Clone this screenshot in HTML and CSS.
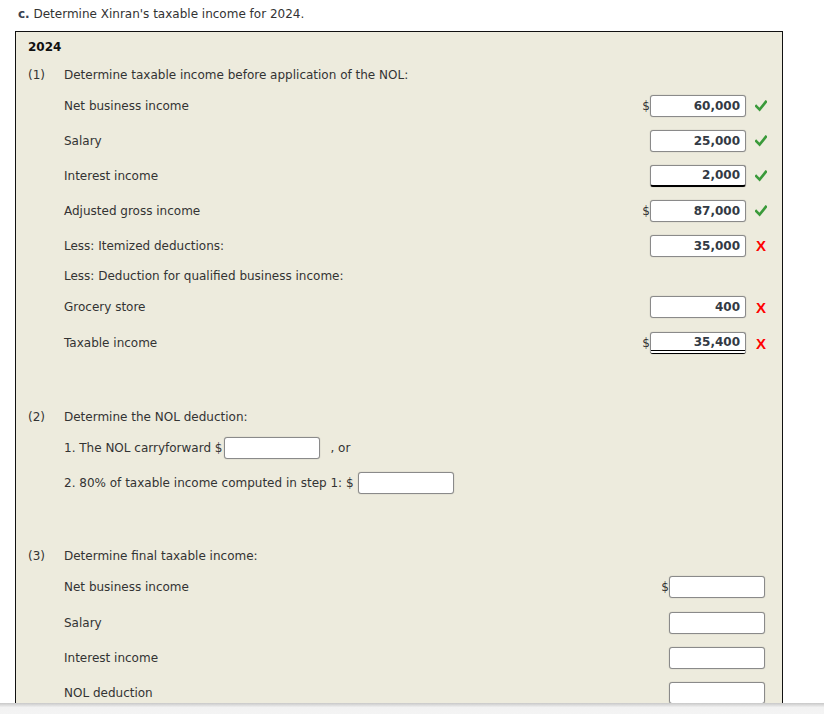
FILE: index.html
```html
<!DOCTYPE html>
<html>
<head>
<meta charset="utf-8">
<link rel="stylesheet" href="styles.css">
</head>
<body>
<div class="title"><b>c.</b> Determine Xinran's taxable income for 2024.</div>
<div class="box">
  <div class="row r-year"><b>2024</b></div>

  <div class="row r-head"><span class="num">(1)</span><span class="lbl">Determine taxable income before application of the NOL:</span></div>
  <div class="row r35"><span class="lbl ind">Net business income</span><span class="cell"><span class="dol">$</span><span class="inp">60,000</span><span class="mark"><svg class="chk" viewBox="0 0 12 12"><path d="M1.2 6.2 L4.6 9.6 L10.8 1.8"/></svg></span></span></div>
  <div class="row r35"><span class="lbl ind">Salary</span><span class="cell"><span class="dol"></span><span class="inp">25,000</span><span class="mark"><svg class="chk" viewBox="0 0 12 12"><path d="M1.2 6.2 L4.6 9.6 L10.8 1.8"/></svg></span></span></div>
  <div class="row r35"><span class="lbl ind">Interest income</span><span class="cell"><span class="dol"></span><span class="inp u1">2,000</span><span class="mark"><svg class="chk" viewBox="0 0 12 12"><path d="M1.2 6.2 L4.6 9.6 L10.8 1.8"/></svg></span></span></div>
  <div class="row r35"><span class="lbl ind">Adjusted gross income</span><span class="cell"><span class="dol">$</span><span class="inp">87,000</span><span class="mark"><svg class="chk" viewBox="0 0 12 12"><path d="M1.2 6.2 L4.6 9.6 L10.8 1.8"/></svg></span></span></div>
  <div class="row r35"><span class="lbl ind">Less: Itemized deductions:</span><span class="cell"><span class="dol"></span><span class="inp">35,000</span><span class="mark bad">X</span></span></div>
  <div class="row r-head"><span class="lbl ind">Less: Deduction for qualified business income:</span></div>
  <div class="row r36"><span class="lbl ind">Grocery store</span><span class="cell"><span class="dol"></span><span class="inp">400</span><span class="mark bad">X</span></span></div>
  <div class="row r36"><span class="lbl ind">Taxable income</span><span class="cell"><span class="dol">$</span><span class="inp u2">35,400</span><span class="mark bad">X</span></span></div>

  <div class="row r-head sec"><span class="num">(2)</span><span class="lbl">Determine the NOL deduction:</span></div>
  <div class="row r36"><span class="lbl ind">1. The NOL carryforward $</span><span class="inp empty s1"></span><span class="after">, or</span></div>
  <div class="row r34"><span class="lbl ind">2. 80% of taxable income computed in step 1: $</span><span class="inp empty s2"></span></div>

  <div class="row r-head sec"><span class="num">(3)</span><span class="lbl">Determine final taxable income:</span></div>
  <div class="row r36"><span class="lbl ind">Net business income</span><span class="cell c3"><span class="dol">$</span><span class="inp empty"></span></span></div>
  <div class="row r35"><span class="lbl ind">Salary</span><span class="cell c3"><span class="dol"></span><span class="inp empty"></span></span></div>
  <div class="row r35"><span class="lbl ind">Interest income</span><span class="cell c3"><span class="dol"></span><span class="inp empty"></span></span></div>
  <div class="row r35"><span class="lbl ind">NOL deduction</span><span class="cell c3"><span class="dol"></span><span class="inp empty"></span></span></div>
</div>
<div class="bottombar"></div>
</body>
</html>
```
FILE: styles.css
```css
html, body {
  margin: 0;
  padding: 0;
  background: #fff;
  overflow: hidden;
}
body {
  font-family: "DejaVu Sans", Verdana, sans-serif;
  font-size: 12px;
  color: #333;
  width: 824px;
  height: 714px;
}
.title {
  height: 31px;
  line-height: 28px;
  padding-left: 18px;
  box-sizing: border-box;
}
.title b { color: #3a4250; }
.box {
  margin-left: 15px;
  width: 768px;
  box-sizing: border-box;
  border: 1px solid #111;
  border-bottom: none;
  background: #edebdd;
  padding: 0 0 0 12px;
}
.row {
  display: flex;
  align-items: center;
}
.r-year { height: 30px; }
.r-year b { font-weight: bold; color: #111; }
.r-head { height: 26px; }
.r35 { height: 35px; }
.r36 { height: 36px; }
.r34 { height: 34px; }
.sec { margin-top: 43px; }
.num { width: 36px; flex: none; }
.ind { margin-left: 36px; }
.lbl { white-space: nowrap; }
.cell {
  margin-left: auto;
  display: flex;
  align-items: center;
  margin-right: 13px;
}
.c3 { margin-right: 17px; }
.dol { width: 8px; text-align: right; }
.inp {
  display: inline-block;
  width: 96px;
  height: 22px;
  box-sizing: border-box;
  border: 1px solid #8a8a8a;
  border-radius: 3px;
  background: #fff;
  box-shadow: 0 0 1px rgba(0,0,0,0.35);
  text-align: right;
  font-weight: bold;
  font-size: 12px;
  line-height: 20px;
  padding-right: 5px;
  color: #333a44;
}
.s1 { margin-left: 2px; }
.s2 { margin-left: 4px; }
.u1 { border-bottom: 2px solid #000; line-height: 19px; }
.u2 { border-bottom: 4px double #000; line-height: 18px; }
.mark {
  box-sizing: border-box;
  width: 23px;
  padding-left: 7px;
  display: flex;
  align-items: center;
  justify-content: center;
  height: 22px;
}
.chk {
  width: 12px;
  height: 12px;
  fill: none;
  stroke: #3a9a3a;
  stroke-width: 2.6;
  stroke-linecap: square;
}
.bad {
  color: #f00;
  font-weight: bold;
  font-family: "Liberation Sans", Arial, sans-serif;
  font-size: 15px;
}
.after { margin-left: 10px; }
.bottombar {
  position: fixed;
  left: 0;
  bottom: 0;
  width: 824px;
  height: 11px;
  background: linear-gradient(#c8c8c8, #f2f2f2 40%, #f4f4f4);
}
```
